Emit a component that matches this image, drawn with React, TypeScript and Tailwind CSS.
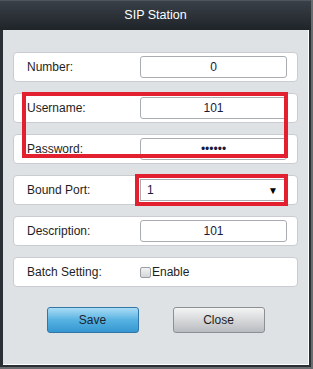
import React from 'react';

const Row = ({ label, children }: { label: string; children: React.ReactNode }) => (
  <div className="flex items-center h-[30px] bg-white border border-[#c9ccd0] rounded-[4px] pl-[13px]">
    <div className="w-[113px] text-[12px] text-[#1e1e1e]">{label}</div>
    {children}
  </div>
);

const Field = ({ value }: { value: string }) => (
  <div className="w-[147px] h-[22px] border border-[#a9adb2] rounded-[3px] bg-white flex items-center justify-center text-[12px] text-[#1a1a40]">
    {value}
  </div>
);

export default function App() {
  return (
    <div className="w-[313px] h-[369px] bg-[#6a6d70] overflow-hidden" style={{ fontFamily: '"Liberation Sans", Arial, sans-serif' }}>
      <div className="w-[311px] h-[367px] bg-[#2a2f35] pl-[3px] pr-[2px] pb-[2px] flex flex-col border-t border-[#50555b]">
        <div className="h-[29px] flex items-center justify-center text-white text-[12.5px] bg-gradient-to-b from-[#3a4048] to-[#1f2429] -ml-[3px] -mr-[2px]">
          SIP Station
        </div>
        <div className="relative flex-1 bg-[#dfe2e5] border-r border-b border-white pt-[22px] pl-[10px] pr-[10px]">
          <div className="flex flex-col gap-[11px]">
            <Row label="Number:"><Field value="0" /></Row>
            <Row label="Username:"><Field value="101" /></Row>
            <Row label="Password:"><Field value="••••••" /></Row>
            <Row label="Bound Port:">
              <div className="w-[147px] h-[22px] border border-[#a9adb2] bg-white flex items-center justify-between pl-[6px] pr-[8px] text-[12px] text-[#1a1a40]">
                <span>1</span>
                <span className="text-[10px] text-black">▼</span>
              </div>
            </Row>
            <Row label="Description:"><Field value="101" /></Row>
            <Row label="Batch Setting:">
              <div className="flex items-center text-[12px] text-[#1e1e1e]">
                <div className="w-[11px] h-[11px] border border-[#9a9ea3] rounded-[2px] bg-gradient-to-b from-[#f2f2f2] to-[#d4d6d8] mr-[1px]" />
                Enable
              </div>
            </Row>
          </div>
          <div className="flex justify-center gap-[34px] mt-[20px]">
            <button className="w-[92px] h-[26px] rounded-[3px] border border-[#3276a8] bg-gradient-to-b from-[#a8dcf5] via-[#56b2e2] to-[#3597d1] text-[12px] text-[#1a2530]">
              Save
            </button>
            <button className="w-[92px] h-[26px] rounded-[3px] border border-[#8c9095] bg-gradient-to-b from-[#f4f4f4] via-[#d6d8da] to-[#b9bcc0] text-[12px] text-[#1e1e1e]">
              Close
            </button>
          </div>
          <div className="absolute left-[19px] top-[62px] w-[266px] h-[66px] border-[4px] border-[#e3202f]" />
          <div className="absolute left-[132px] top-[144px] w-[153px] h-[32px] border-[4px] border-[#e3202f]" />
        </div>
      </div>
    </div>
  );
}
